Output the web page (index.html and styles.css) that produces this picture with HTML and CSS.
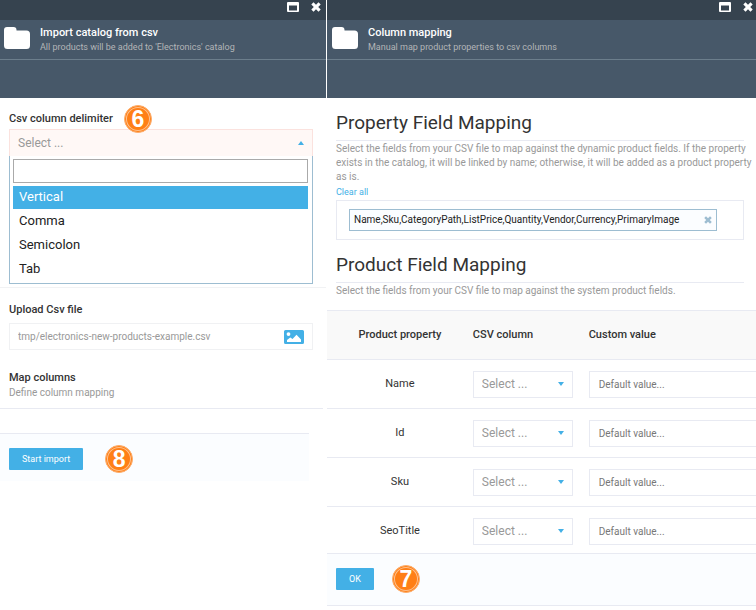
FILE: index.html
```html
<!DOCTYPE html>
<html lang="en">
<head>
<meta charset="utf-8">
<meta name="viewport" content="width=device-width, initial-scale=1">
<title>Import catalog from csv</title>
<link rel="stylesheet" href="styles.css">
</head>
<body>
<svg class="sprite" aria-hidden="true">
  <symbol id="folder" viewBox="0 0 26 22"><path d="M3 0h6.500a3 3 0 0 1 3 3v.500h10A3.500 3.500 0 0 1 26 7v11.500a3.500 3.500 0 0 1-3.500 3.500h-19A3.500 3.500 0 0 1 0 18.500V3a3 3 0 0 1 3-3z"/></symbol>
  <symbol id="window" viewBox="0 0 12 10"><path fill-rule="evenodd" d="M1 0h10a1 1 0 0 1 1 1v8a1 1 0 0 1-1 1H1a1 1 0 0 1-1-1V1a1 1 0 0 1 1-1zM2 3.500V8.500h8V3.500z"/></symbol>
  <symbol id="cross" viewBox="0 0 10 10"><path d="M2.500.300 5 2.800 7.500.300 9.700 2.500 7.200 5l2.500 2.500-2.200 2.200L5 7.200 2.500 9.700.300 7.500 2.800 5 .300 2.500z"/></symbol>
  <symbol id="picture" viewBox="0 0 20 14"><path fill-rule="evenodd" d="M1.500 0h17A1.500 1.500 0 0 1 20 1.500v11a1.500 1.500 0 0 1-1.500 1.500h-17A1.500 1.500 0 0 1 0 12.500v-11A1.500 1.500 0 0 1 1.500 0zM4.500 2.200a1.900 1.900 0 1 0 0 3.800 1.900 1.900 0 0 0 0-3.800zM3 12h14V9.500L12.500 4.800 8.500 9 6.300 7.500 3 10z"/></symbol>
</svg>
<main class="blades">
  <section class="blade blade-import">
    <header>
      <div class="toolbar">
        <button type="button" class="tool" aria-label="Maximize"><svg class="i-window"><use href="#window"/></svg></button>
        <button type="button" class="tool" aria-label="Close"><svg class="i-cross"><use href="#cross"/></svg></button>
      </div>
      <div class="head">
        <svg class="i-folder"><use href="#folder"/></svg>
        <div><h1>Import catalog from csv</h1><p>All products will be added to 'Electronics' catalog</p></div>
      </div>
      <div class="head-space"></div>
    </header>
    <form>
      <div class="group group-delimiter">
        <div class="label-row"><span class="label" id="delimiter">Csv column delimiter</span><span class="badge">6</span></div>
        <button type="button" class="picker" aria-expanded="true" aria-labelledby="delimiter">Select ...<i class="caret-up"></i></button>
        <div class="menu">
          <input type="text" class="search" aria-label="Search delimiter">
          <ul role="listbox" aria-labelledby="delimiter">
            <li role="option" aria-selected="true" class="active">Vertical</li>
            <li role="option">Comma</li>
            <li role="option">Semicolon</li>
            <li role="option">Tab</li>
          </ul>
        </div>
      </div>
      <div class="group group-file">
        <label class="label" for="file">Upload Csv file</label>
        <div class="file"><input id="file" type="text" value="tmp/electronics-new-products-example.csv"><button type="button" aria-label="Browse"><svg class="i-picture"><use href="#picture"/></svg></button></div>
      </div>
      <div class="group group-map">
        <a href="#mapping" class="label">Map columns</a>
        <p class="note">Define column mapping</p>
      </div>
      <footer class="actions actions-import"><button type="button" class="primary">Start import</button><span class="badge">8</span></footer>
    </form>
  </section>

  <section class="blade blade-mapping" id="mapping">
    <header>
      <div class="toolbar">
        <button type="button" class="tool" aria-label="Maximize"><svg class="i-window"><use href="#window"/></svg></button>
        <button type="button" class="tool" aria-label="Close"><svg class="i-cross"><use href="#cross"/></svg></button>
      </div>
      <div class="head">
        <svg class="i-folder"><use href="#folder"/></svg>
        <div><h1>Column mapping</h1><p>Manual map product properties to csv columns</p></div>
      </div>
      <div class="head-space"></div>
    </header>
    <form>
      <div class="intro">
        <h2>Property Field Mapping</h2>
        <p class="note">Select the fields from your CSV file to map against the dynamic product fields. If the property exists in the catalog, it will be linked by name; otherwise, it will be added as a product property as is.</p>
        <a href="#clear" class="clear">Clear all</a>
        <div class="tags"><div class="tag"><span>Name,Sku,CategoryPath,ListPrice,Quantity,Vendor,Currency,PrimaryImage</span><button type="button" aria-label="Remove"><svg class="i-remove"><use href="#cross"/></svg></button></div></div>
        <h2>Product Field Mapping</h2>
        <p class="note">Select the fields from your CSV file to map against the system product fields.</p>
      </div>
      <table>
        <thead><tr><th class="property">Product property</th><th class="column">CSV column</th><th>Custom value</th></tr></thead>
        <tbody>
          <tr><td class="property">Name</td><td><div class="select"><select aria-label="CSV column for Name"><option>Select ...</option></select></div></td><td><input type="text" aria-label="Custom value for Name" placeholder="Default value..."></td></tr>
          <tr><td class="property">Id</td><td><div class="select"><select aria-label="CSV column for Id"><option>Select ...</option></select></div></td><td><input type="text" aria-label="Custom value for Id" placeholder="Default value..."></td></tr>
          <tr><td class="property">Sku</td><td><div class="select"><select aria-label="CSV column for Sku"><option>Select ...</option></select></div></td><td><input type="text" aria-label="Custom value for Sku" placeholder="Default value..."></td></tr>
          <tr><td class="property">SeoTitle</td><td><div class="select"><select aria-label="CSV column for SeoTitle"><option>Select ...</option></select></div></td><td><input type="text" aria-label="Custom value for SeoTitle" placeholder="Default value..."></td></tr>
        </tbody>
      </table>
      <footer class="actions actions-mapping"><button type="button" class="primary">OK</button><span class="badge">7</span></footer>
    </form>
  </section>
</main>
</body>
</html>
```
FILE: styles.css
```css
* { box-sizing: border-box; }
body, h1, h2, p, ul { margin: 0; padding: 0; }
body { background: #fff; color: #333; font-family: Roboto, "Liberation Sans", sans-serif; font-size: 12px; line-height: 16px; }
button, input, select { font: inherit; color: inherit; margin: 0; border: 0; border-radius: 0; padding: 0; background: none; outline: 0; }
svg { display: block; }
.sprite { position: absolute; width: 0; height: 0; }

.blades { display: flex; gap: 1px; min-height: 100vh; }
.blade { min-width: 0; overflow: hidden; }
.blade-import { flex: 326 1 0; }
.blade-mapping { flex: 429 1 0; }

.toolbar { display: flex; justify-content: flex-end; align-items: center; gap: 12px; height: 20px; padding: 0 5px 6px 0; background: #36434f; color: #fff; }
.blade-mapping .toolbar { padding-right: 3px; }
.tool svg, .i-folder { fill: #fff; }
.i-window { width: 12px; height: 10px; }
.i-cross { width: 10px; height: 10px; }
.head { display: flex; gap: 10px; height: 40px; padding: 5px 4px; border-bottom: 1px solid #6c7e8c; background: #475869; }
.blade-mapping .head { padding-left: 5px; }
.i-folder { flex: none; width: 26px; height: 22px; margin-top: 2px; }
.head h1 { color: #fff; font-size: 11px; font-weight: 500; line-height: 16px; }
.head p { color: #b3b5b7; font-size: 9px; line-height: 13px; }
.head-space { height: 38px; background: #475869; }

.label { color: #333; font-size: 11px; font-weight: 500; line-height: 16px; text-decoration: none; }
.note { color: #999; font-size: 10px; line-height: 14px; }
.group { padding: 0 13px 0 9px; }
.group-delimiter { padding-top: 13px; padding-bottom: 3px; border-bottom: 1px solid #f1f2f4; }
.label-row { display: flex; align-items: center; gap: 11px; height: 16px; margin-bottom: 2px; }
.picker { display: flex; justify-content: space-between; align-items: center; width: 100%; height: 27px; padding: 0 8px; border: 1px solid #fbe2de; border-bottom: 0; background: #fff8f6; color: #999; text-align: left; }
.caret-up { border: 3px solid transparent; border-top: 0; border-bottom: 4px solid #43b0e6; }
.menu { padding: 3px 4px 2px 3px; border: 1px solid #9dbdd1; border-top: 0; }
.search { display: block; width: 100%; height: 24px; border: 1px solid #aaa; padding: 0 4px; }
.menu ul { margin-top: 3px; list-style: none; }
.menu li { height: 23px; margin-bottom: 1px; padding-left: 6px; color: #222; font-size: 13px; line-height: 22px; }
.menu li:last-child { margin-bottom: 0; }
.menu .active { background: #43b0e6; color: #fff; }

.group-file { padding-top: 14px; }
.group-file .label { display: block; margin-bottom: 5px; }
.file { display: flex; align-items: center; height: 27px; padding: 0 8px; border: 1px solid #f0f1f3; }
.file input { flex: 1; min-width: 0; color: #999; font-size: 10px; }
.i-picture { width: 20px; height: 14px; fill: #43b0e6; }
.group-map { margin: 19px 3px 24px 0; padding-bottom: 8px; border-bottom: 1px solid #e8eaf2; }

.actions { display: flex; align-items: center; gap: 18px; height: 48px; padding: 3px 9px 0; border-top: 1px solid #e8eaf2; background: #fbfdff; }
.actions-import { margin-right: 17px; gap: 22px; }
.actions-mapping { position: relative; height: 53px; margin-top: -3px; padding-top: 0; border-bottom: 1px solid #e8eaf2; }
.primary { height: 22px; padding: 0 13px; border-radius: 1px; background: #43b0e6; color: #fff; font-size: 9px; }
.badge { display: flex; flex: none; align-items: center; justify-content: center; width: 28px; height: 28px; border: 1px solid #fdae6d; border-radius: 50%; background: #ff7f16; box-shadow: inset 0 0 0 1px #ff7f16, inset 0 0 0 2px #fdc08d; color: #fff; font: bold 23px "Liberation Sans", sans-serif; z-index: 1; }

.intro { padding: 12px 12px 12px 9px; }
.intro .note { margin: 1px -12px 0 0; }
h2 { height: 31px; border-bottom: 1px solid #e8eaf2; font-size: 19px; font-weight: 400; line-height: 26px; }
.clear { display: block; color: #43b0e6; font-size: 9px; line-height: 16px; text-decoration: none; }
.tags { margin-bottom: 12px; padding: 8px 26px 8px 12px; border: 1px solid #e8eaf2; }
.tag { display: flex; justify-content: space-between; align-items: center; height: 22px; padding: 0 4px; border: 1px solid #9dbdd1; background: #fbfdff; color: #222; font-size: 10px; }
.i-remove { width: 8px; height: 8px; fill: #9dbdd1; }

table { width: 100%; border-collapse: collapse; table-layout: fixed; font-size: 11px; }
th { height: 49px; padding: 0; border-top: 1px solid #e8eaf2; background: #f9f9f9; font-weight: 500; text-align: left; }
td { height: 49px; padding: 0; border-top: 1px solid #e8eaf2; }
.property { width: 34%; text-align: center; }
th.column { width: 27%; }
.select { position: relative; width: 100px; font-size: 12px; }
.select::after { content: ""; position: absolute; right: 9px; top: 11px; border: 3px solid transparent; border-top: 4px solid #43b0e6; border-bottom: 0; pointer-events: none; }
.select select { display: block; appearance: none; width: 100%; height: 27px; padding: 0 8px; border: 1px solid #e8eaf2; color: #999; }
td input { display: block; width: 100%; height: 27px; padding: 0 9px; border: 1px solid #e8eaf2; border-right: 0; font-size: 10px; }
td input::placeholder { color: #777; }
```
